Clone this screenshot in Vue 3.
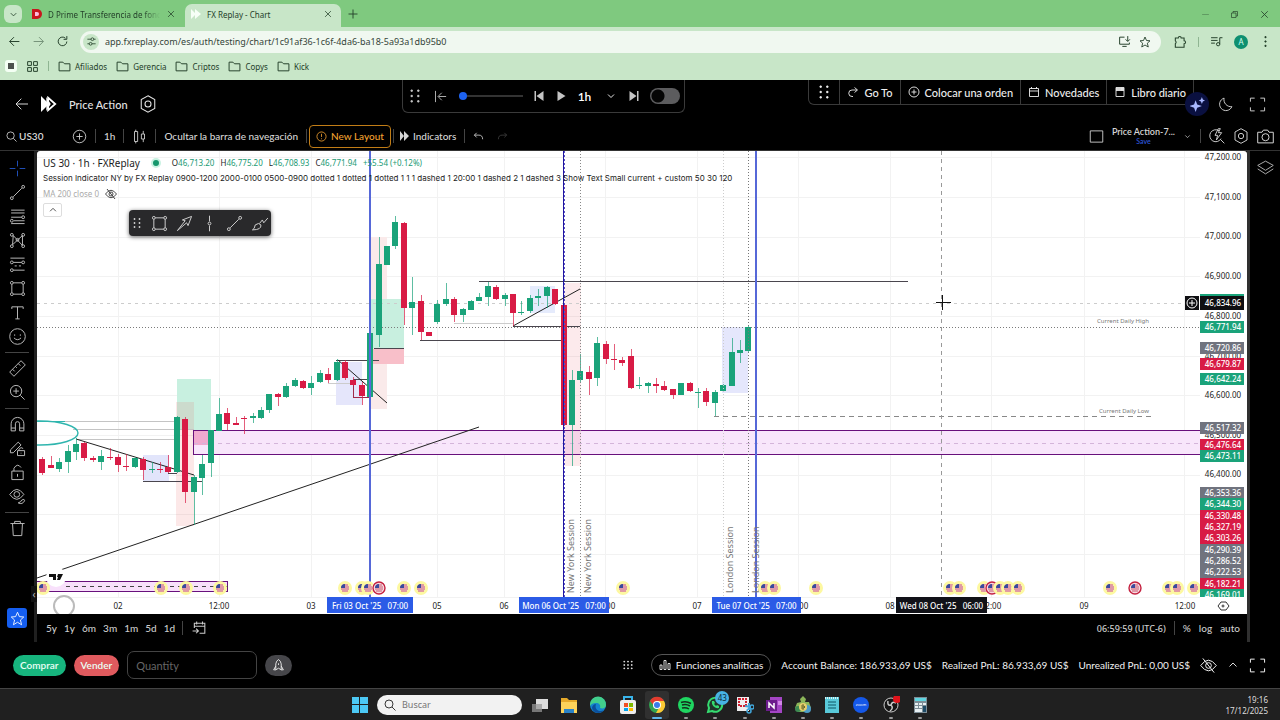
<template>
  <div class="screen">
    <header class="browser">
      <div class="tab-strip">
        <button class="tab-search" aria-label="Search tabs"><Icon name="chevronDown" :size="11" /></button>
        <div class="tab">
          <svg class="favicon" viewBox="0 0 10 10"><path d="M0 0h5a5 5 0 0 1 0 10H0z" fill="#c8161d" /><path d="M3 3h2a2 2 0 0 1 0 4H3z" fill="#fbd" /></svg>
          <span class="tab-title faded">D Prime Transferencia de fondos</span>
          <button aria-label="Close tab"><Icon name="close" :size="10" /></button>
        </div>
        <div class="tab active">
          <svg class="favicon" viewBox="0 0 10 10"><path d="M0 0l5 5-5 5zM4 0l6 5-6 5z" fill="#f7fff7" /></svg>
          <span class="tab-title">FX Replay - Chart</span>
          <button aria-label="Close tab"><Icon name="close" :size="10" /></button>
        </div>
        <button class="new-tab" aria-label="New tab"><Icon name="plus" :size="12" /></button>
        <div class="window-controls">
          <button class="dim" aria-label="Minimize"><Icon name="minimize" :size="9" /></button>
          <button aria-label="Restore"><Icon name="restore" :size="9" /></button>
          <button aria-label="Close"><Icon name="close" :size="11" /></button>
        </div>
      </div>
      <div class="address-row">
        <button aria-label="Back"><Icon name="back" :size="13" /></button>
        <button class="dim" aria-label="Forward"><Icon name="forward" :size="13" /></button>
        <button aria-label="Reload"><Icon name="reload" :size="13" /></button>
        <div class="address">
          <span class="tune"><Icon name="tune" :size="11" /></span>
          <input v-model="url" type="text" aria-label="Address" />
          <Icon name="install" :size="13" />
          <Icon name="star" :size="12" />
        </div>
        <button aria-label="Extensions"><Icon name="puzzle" :size="14" /></button>
        <i class="sep"></i>
        <button aria-label="Media"><Icon name="music" :size="13" /></button>
        <span class="avatar">A</span>
        <button aria-label="Menu"><Icon name="more" :size="13" /></button>
      </div>
      <nav class="bookmarks">
        <span class="stop"></span>
        <Icon name="apps" :size="13" />
        <i class="sep"></i>
        <a v-for="b in bookmarks" :key="b" href="#"><Icon name="folder" :size="13" />{{ b }}</a>
      </nav>
    </header>

    <section class="app-header">
      <div class="brand">
        <button aria-label="Back"><Icon name="back" :size="16" /></button>
        <svg class="logo" viewBox="0 0 18 18"><path d="M0 0l9 9-9 9z" fill="#fff" /><path d="M8 2l8 7-8 7z" fill="none" stroke="#fff" stroke-width="2" /><path d="M6 1l5 8-5 8z" fill="#fff" /></svg>
        <span class="session-name">Price Action</span>
        <button aria-label="Settings"><Icon name="hex" :size="18" /></button>
      </div>
      <div class="playback">
        <Icon name="grip" :size="16" />
        <button aria-label="Jump back"><Icon name="jumpStart" :size="15" /></button>
        <input v-model="speed" class="speed" type="range" min="0" max="100" aria-label="Speed" />
        <button aria-label="Previous"><Icon name="prev" :size="12" /></button>
        <button aria-label="Play"><Icon name="play" :size="12" /></button>
        <button class="interval">1h <Icon name="chevronDown" :size="12" /></button>
        <button aria-label="Next"><Icon name="next" :size="12" /></button>
        <input v-model="auto" class="switch" type="checkbox" aria-label="Auto play" />
      </div>
      <div class="actions">
        <span class="cell"><Icon name="grip" :size="16" /></span>
        <button v-for="a in actions" :key="a.label" class="cell"><Icon :name="a.icon" :size="12" />{{ a.label }}</button>
      </div>
      <div class="header-tools">
        <button class="ai" aria-label="Assistant"><Icon name="sparkle" :size="15" /></button>
        <button aria-label="Theme"><Icon name="moon" :size="17" /></button>
        <button class="expand" aria-label="Full screen"><Icon name="full" :size="17" /></button>
      </div>
    </section>

    <section class="chart-toolbar">
      <button class="symbol"><Icon name="search" :size="11" />US30</button>
      <button aria-label="Compare"><Icon name="circlePlus" :size="15" /></button>
      <i class="sep"></i>
      <button>1h</button>
      <i class="sep"></i>
      <button aria-label="Candles"><Icon name="candles" :size="15" /></button>
      <i class="sep"></i>
      <button class="hide-nav">Ocultar la barra de navegación</button>
      <i class="sep"></i>
      <button class="new-layout"><Icon name="info" :size="11" />New Layout</button>
      <i class="sep"></i>
      <button class="indicators"><svg viewBox="0 0 9 10"><path d="M0 0l4 5-4 5zM4 0l5 5-5 5z" fill="currentColor" /></svg>Indicators</button>
      <i class="sep"></i>
      <button class="undo" aria-label="Undo"><Icon name="undo" :size="11" /></button>
      <button class="redo" aria-label="Redo"><Icon name="redo" :size="11" /></button>
      <div class="layout-tools">
        <button aria-label="Layout"><Icon name="square" :size="15" /></button>
        <button class="layout-name">Price Action-7...<small>Save</small></button>
        <Icon name="chevronDown" :size="9" />
        <i class="sep"></i>
        <button aria-label="Quick search"><Icon name="quick" :size="16" /></button>
        <button aria-label="Chart settings"><Icon name="hex" :size="16" /></button>
        <button aria-label="Snapshot"><Icon name="camera" :size="17" /></button>
      </div>
    </section>

    <main class="workspace">
      <aside class="drawing-bar">
        <template v-for="(t, i) in drawingTools" :key="i">
          <hr v-if="t === '-'" />
          <button v-else :class="{ selected: t === 'cross' }" :aria-label="t"><Icon :name="t" :size="17" /></button>
        </template>
        <button class="favorites" aria-label="Favorites"><Icon name="star" :size="15" /></button>
      </aside>

      <div class="chart-column">
        <div class="chart">
          <svg class="plot" viewBox="37 151 1210 463">
            <g class="crisp">
              <path v-for="y in gridRows" :key="'r' + y" :d="`M37 ${y}H1200`" class="grid" />
              <path v-for="x in gridCols" :key="'c' + x" :d="`M${x} 151V597`" class="grid" />
              <path d="M37 597H1200" class="grid" />
              <rect v-for="(z, i) in zones" :key="'z' + i" :x="z[0]" :y="z[1]" :width="z[2] - z[0]" :height="z[3] - z[1]" :fill="z[4]" />
              <path v-for="(l, i) in lines" :key="'l' + i" :d="l[0]" :stroke="l[1]" :stroke-width="l[2] || 1" :stroke-dasharray="l[3]" fill="none" />
            </g>
            <path d="M37 578L479 427M76 439L194 475M338 360L387 403M513 326L580 289" class="trend" />
            <ellipse cx="40" cy="433" rx="38" ry="12" class="oval" />
            <g class="crisp">
              <g v-for="(c, i) in bars" :key="'b' + i" :fill="c.color">
                <rect :x="c.x" :y="c.high" width="1" :height="c.low - c.high" opacity="0.7" />
                <rect :x="c.x - 3" :y="c.top" width="6" :height="c.height" />
              </g>
              <path v-for="s in sessionLines" :key="s[0]" :d="`M${s[0]} 151V597`" :stroke="s[1]" :stroke-width="s[2]" :stroke-dasharray="s[3]" />
            </g>
            <text v-for="s in sessionNames" :key="s[0]" class="session" :transform="`translate(${s[0]} 593) rotate(-90)`">{{ s[1] }}</text>
            <text x="1149" y="323" class="note">Current Daily High</text>
            <text x="1149" y="413" class="note">Current Daily Low</text>

            <circle cx="56" cy="577" r="10" fill="#fff" />
            <path d="M49 574h7v6h-3v-3h-4zM58 574h5l-3 6h-3l1-3h-1z" fill="#111" />
            <g v-for="(e, i) in events" :key="'e' + i" :transform="`translate(${e.x} 588)`">
              <circle r="7" :fill="e.hot ? '#fff' : '#fdf8a0'" />
              <circle v-if="e.hot" r="6" fill="#f7d9e0" stroke="#c4203f" stroke-width="1.4" />
              <circle r="4" fill="#e9dce6" />
              <path d="M-4 -1H4M-4 1H4M-3 3H3M-2 -3H3" stroke="#d4566a" />
              <path d="M0 0H-4A4 4 0 0 1 0 -4z" fill="#3a4a9c" />
            </g>

            <g class="axis">
              <text v-for="t in times" :key="t[0]" :x="t[0]" y="609">{{ t[1] }}</text>
              <g v-for="t in dateTags" :key="t.x">
                <rect :x="t.x" y="597" :width="t.w" height="16" :fill="t.color" />
                <text :x="t.x + t.w / 2" y="609" class="tag">{{ t.text }}</text>
              </g>
              <text v-for="p in prices" :key="p[0]" x="1223" :y="p[0] + 3">{{ p[1] }}</text>
              <g v-for="p in priceTags" :key="p[1]">
                <rect x="1200" :y="p[0] - 6" width="44" height="12" :fill="p[2]" />
                <text x="1223" :y="p[0] + 3" class="tag">{{ p[1] }}</text>
              </g>
              <rect x="1200" y="294" width="44" height="3" fill="#1aa37a" />
              <rect x="1200" y="296" width="44" height="14" fill="#0f0f12" />
              <text x="1223" y="306" class="tag">46,834.96</text>
              <rect x="1200" y="597" width="47" height="17" fill="#fff" />
            </g>
            <rect x="1185" y="296" width="14" height="14" fill="#0f0f12" />
            <circle cx="1192" cy="303" r="5" class="ring" />
            <path d="M1192 300v6M1189 303h6" stroke="#fff" />
            <path d="M936 302.5h15M942.5 295v15" stroke="#111" />
            <circle cx="64" cy="606" r="10" fill="#fff" fill-opacity="0.6" stroke="#bbb" stroke-width="2" />
            <path d="M1221 602h5l3 4-3 4h-5l-3-4z" fill="none" stroke="#333" />
            <circle cx="1223" cy="606" r="1" fill="none" stroke="#333" />
          </svg>

          <div class="legend">
            <p class="legend-title">US 30 · 1h · FXReplay <i class="live"></i>
              <span class="ohlc">O<b>46,713.20</b> H<b>46,775.20</b> L<b>46,708.93</b> C<b>46,771.94</b> <b>+55.54 (+0.12%)</b></span>
            </p>
            <p class="legend-study">Session Indicator NY by FX Replay 0900-1200 2000-0100 0500-0900 dotted 1 dotted 1 dotted 1 1 1 dashed 1 20:00 1 dashed 2 1 dashed 3 Show Text Small current + custom 50 30 120</p>
            <p class="legend-ma">MA 200 close 0 <Icon name="eyeOff" :size="12" /></p>
            <button class="collapse" aria-label="Collapse"><Icon name="chevronUp" :size="10" /></button>
          </div>

          <div class="floating-tools">
            <Icon name="grip" :size="12" />
            <button v-for="t in favoriteTools" :key="t" :aria-label="t"><Icon :name="t" :size="17" /></button>
          </div>
          <button class="drawer" aria-label="Hide tools">‹</button>
        </div>

        <footer class="range-bar">
          <button v-for="r in ranges" :key="r">{{ r }}</button>
          <i class="sep"></i>
          <button class="go-date" aria-label="Go to date"><Icon name="calendar" :size="14" /></button>
          <div class="scale-tools">
            <span class="utc">06:59:59 (UTC-6)</span>
            <i class="sep"></i>
            <button>%</button>
            <button>log</button>
            <button>auto</button>
          </div>
        </footer>
      </div>

      <aside class="right-rail">
        <button aria-label="Object tree"><Icon name="layers" :size="17" /></button>
      </aside>
    </main>

    <section class="account">
      <button class="buy">Comprar</button>
      <button class="sell">Vender</button>
      <input v-model="quantity" class="quantity" type="text" placeholder="Quantity" aria-label="Quantity" />
      <button class="rocket" aria-label="Quick order"><Icon name="rocket" :size="13" /></button>
      <div class="stats">
        <Icon class="dots" name="dots" :size="10" />
        <button class="analytics"><Icon name="chart" :size="12" />Funciones analíticas</button>
        <span>Account Balance: 186.933,69 US$</span>
        <span>Realized PnL: 86.933,69 US$</span>
        <span>Unrealized PnL: 0,00 US$</span>
        <button aria-label="Hide balance"><Icon name="eyeOff" :size="17" /></button>
        <button aria-label="Expand"><Icon name="chevronUp" :size="12" /></button>
        <button aria-label="Full screen"><Icon name="full" :size="17" /></button>
      </div>
    </section>

    <footer class="taskbar">
      <div></div>
      <div class="pinned">
        <button aria-label="Start">
          <svg viewBox="0 0 16 16" width="16" height="16"><path d="M0 0h7v7H0zM8 0h8v7H8zM0 8h7v8H0zM8 8h8v8H8z" fill="#4cc8f4" /></svg>
        </button>
        <label class="search"><Icon name="search" :size="12" /><input v-model="query" type="text" placeholder="Buscar" aria-label="Buscar" /></label>
        <div class="apps">
          <button aria-label="Task view"><svg viewBox="0 0 18 18"><path d="M1 8h10v8H1z" fill="#777" /><path d="M5 3h12v10H5z" fill="#ddd" /><path d="M5 8h6v5H5z" fill="#aaa" /></svg></button>
          <button aria-label="Files"><svg viewBox="0 0 18 18"><path d="M1 2h6l2 2h8v13H1z" fill="#e5a92a" /><path d="M1 6h16v11H1z" fill="#fbd25a" /><path d="M4 13h10v4H4z" fill="#2a83c8" /></svg></button>
          <button aria-label="Edge"><svg viewBox="0 0 18 18"><circle cx="9" cy="9" r="8" fill="#1484cf" /><path d="M1 8a8 8 0 0 1 16 1c0 3-3 4-6 3 1-3-1-5-4-5-3 0-5 1-6 3z" fill="#42cf8c" /><path d="M7 8c-2 5 3 9 8 6-4 5-11 3-12-2 0-2 2-4 4-4z" fill="#0c4f9c" /></svg></button>
          <button aria-label="Store"><svg viewBox="0 0 18 18"><path d="M5 5V1h8v4" fill="none" stroke="#39b4ea" stroke-width="2" /><rect x="1" y="4" width="16" height="14" rx="2" fill="#eee" /><path d="M5 7h4v4H5z" fill="#f25022" /><path d="M10 7h4v4h-4z" fill="#7fba00" /><path d="M5 12h4v3H5z" fill="#00a4ef" /><path d="M10 12h4v3h-4z" fill="#ffb900" /></svg></button>
          <button class="current" aria-label="Chrome"><svg viewBox="0 0 18 18"><circle cx="9" cy="9" r="8" fill="#31a350" /><path d="M2 5a8 8 0 0 1 14 0z" fill="#e33b2e" /><path d="M2 5l5 6 2-6z" fill="#e33b2e" /><path d="M9 5h7a8 8 0 0 1-8 12l4-7z" fill="#fcc934" /><circle cx="9" cy="9" r="4" fill="#fff" /><circle cx="9" cy="9" r="3" fill="#3a7ce8" /></svg></button>
          <button class="open" aria-label="Spotify"><svg viewBox="0 0 18 18"><circle cx="9" cy="9" r="8" fill="#1fd661" /><path d="M4 6.500q5-2 10 1M5 9q4-1.500 8 1M5 12q4-1 7 1" fill="none" stroke="#14301d" stroke-width="1.500" /></svg></button>
          <button class="open" aria-label="WhatsApp"><svg viewBox="0 0 18 18"><path d="M2 16l1-4a7 7 0 1 1 3 3z" fill="#20352a" stroke="#35dc70" stroke-width="2" /><path d="M6 5c-1 4 3 8 7 7l0-2-2-1-1 1-2-2 1-1-1-2z" fill="#35dc70" /></svg><em>43</em></button>
          <button class="open" aria-label="Snipping"><svg viewBox="0 0 18 18"><rect x="1" y="1" width="12" height="14" fill="#eee" /><path d="M3 3h7v7H3z" fill="none" stroke="#cf2030" stroke-width="2" stroke-dasharray="2 1" /><path d="M9 10l6 1M13 7l0 7" stroke="#41a5d8" stroke-width="2" /><circle cx="13" cy="15" r="2" fill="none" stroke="#41a5d8" stroke-width="1.500" /><circle cx="16" cy="11" r="2" fill="none" stroke="#41a5d8" stroke-width="1.500" /></svg></button>
          <button class="open" aria-label="OneNote"><svg viewBox="0 0 18 18"><path d="M5 1h12v16H5z" fill="#a445c5" /><path d="M13 5h4v4h-4z" fill="#d085e6" /><path d="M1 4h11v11H1z" fill="#6b1c8b" /><path d="M4 12V7l5 5V7" fill="none" stroke="#fff" stroke-width="1.500" /></svg></button>
          <button class="open" aria-label="Money"><svg viewBox="0 0 18 18"><path d="M9 0l3 3-1 3h4l2 6-3 4H4l-3-4 2-5 4-1-1-3z" fill="#8cb65a" /><circle cx="13" cy="13" r="4" fill="#4d9dc7" /><circle cx="4" cy="13" r="3" fill="#3d8a52" /><circle cx="9" cy="11" r="4" fill="#e6cf6c" /><path d="M9 8v6M7 10h3l1 1-1 1H7" fill="none" stroke="#6b6a2c" /></svg></button>
          <button class="open" aria-label="Notepad"><svg viewBox="0 0 18 18"><rect x="2" y="1" width="14" height="16" fill="#59c9d9" /><path d="M2 2h14" stroke="#d9f5f8" stroke-width="2" stroke-dasharray="1 1" /><path d="M5 6h8M5 9h8M5 12h8" stroke="#0e5766" /></svg></button>
          <button class="open" aria-label="Zoom"><svg viewBox="0 0 18 18"><circle cx="9" cy="9" r="8" fill="#1558e8" /><text x="9" y="10" class="zoom-mark">zoom</text></svg></button>
          <button class="open" aria-label="OBS"><svg viewBox="0 0 18 18"><circle cx="9" cy="9" r="7" fill="#161616" stroke="#ccc" /><path d="M9 9q-4 1-3-4M9 9q1-4 5-2M9 9q3 3-1 6" fill="none" stroke="#ccc" stroke-width="1.500" /><circle cx="15" cy="3" r="4" fill="#e0131b" /></svg></button>
          <button class="open" aria-label="Calculator"><svg viewBox="0 0 18 18"><rect x="3" y="1" width="13" height="16" fill="#7d8d96" /><path d="M4 2h11v3H4z" fill="#5fd4e0" /><path d="M4 7h3v2H4zM8 7h3v2H8zM12 7h3v2h-3zM4 10h3v2H4zM8 10h3v2H8zM4 13h7v3H4z" fill="#e6eef1" /><path d="M12 10h3v6h-3z" fill="#1f4b66" /></svg></button>
        </div>
      </div>
      <div class="clock">19:16<br />17/12/2025</div>
    </footer>
  </div>
</template>

<script setup>
import { h, ref } from "vue";

const DOT = (x, y) => `M${x - 1} ${y - 1}h2v2h-2z`;

const paths = {
  chevronDown: "M6 9l6 6 6-6",
  chevronUp: "M5 15l7-7 7 7",
  close: "M5 5l14 14M19 5L5 19",
  plus: "M12 3v18M3 12h18",
  minimize: "M3 12h18",
  restore: "M4 8h12v12H4zM8 8V4h12v12h-4",
  back: "M21 12H3M11 4l-8 8 8 8",
  forward: "M3 12h18M13 4l8 8-8 8",
  reload: "M20 12a8 8 0 1 1-2.500-6M20 2v6h-6",
  tune: "M3 7h8M17 7h4M3 17h4M13 17h8M14 4a3 3 0 1 0 0 6 3 3 0 0 0 0-6zM10 14a3 3 0 1 0 0 6 3 3 0 0 0 0-6z",
  install: "M12 4H3v13h18v-3M8 21h8M18 2v9M14 8l4 4 4-4",
  star: "M12 2l3 7 7 .6-5.300 4.800L18.500 22 12 18l-6.500 4 1.800-7.600L2 9.600 9 9z",
  puzzle: "M4 5h5a2.500 2.500 0 0 1 5 0h5v5a2.500 2.500 0 0 1 0 5v6H4v-6a3 3 0 0 0 0-5z",
  music: "M2 5h12M2 10h12M2 15h7M18 17V5h5M18 17a3 3 0 1 1-3-3 3 3 0 0 1 3 3z",
  more: DOT(12, 4) + DOT(12, 12) + DOT(12, 20),
  apps: "M3 3h7v7H3zM14 3h7v7h-7zM3 14h7v7H3zM14 14h7v7h-7z",
  folder: "M2 4h7l3 3h10v13H2z",
  hex: "M12 1l9 5v12l-9 5-9-5V6zM12 8a4 4 0 1 0 0 8 4 4 0 0 0 0-8z",
  grip: [4, 12, 20].map((y) => DOT(7, y) + DOT(17, y)).join(""),
  dots: [4, 12, 20].map((y) => DOT(3, y) + DOT(12, y) + DOT(21, y)).join(""),
  jumpStart: "M4 3v18M21 12H9M14 6l-6 6 6 6",
  prev: "M3 2h3v20H3zM21 2v20L7 12z",
  play: "M5 2l16 10L5 22z",
  next: "M18 2h3v20h-3zM3 2v20l14-10z",
  goTo: "M20 8H10a6.500 6.500 0 0 0 0 13h2M15 3l6 5-6 5",
  circlePlus: "M12 2a10 10 0 1 0 0 20 10 10 0 0 0 0-20zM12 7v10M7 12h10",
  calendarDay: "M3 5h18v16H3zM3 10h18M7 2v4M17 2v4",
  book: "M4 3h16v18H4zM4 5h16M4 7h16M4 9h16M16 3v7",
  sparkle: "M9 5l2.500 7L19 14.500 11.500 17 9 24 6.500 17-1 14.500 6.500 12zM19 0l1.500 4L24 5.500 20.500 7 19 11l-1.500-4L14 5.500 17.500 4z",
  moon: "M10 3a9 9 0 1 0 11 12A10 10 0 0 1 10 3z",
  full: "M2 8V3h6M16 3h6v5M22 16v5h-6M8 21H2v-5",
  search: "M10 2a8 8 0 1 0 0 16 8 8 0 0 0 0-16zM16 16l7 7",
  candles: "M4 4h5v16H4zM6 1v3M6 20v3M15 8h5v8h-5zM18 3v5M18 16v5",
  info: "M12 2a10 10 0 1 0 0 20 10 10 0 0 0 0-20zM12 6v7M12 16v2",
  undo: "M8 4L3 9l5 5M3 9h10q8 0 8 9",
  redo: "M16 4l5 5-5 5M21 9H11q-8 0-8 9",
  square: "M2 3h20v18H2z",
  quick: "M15 4a9 9 0 1 0 3 12M17 17l6 6M14 1l-5 10h4l-2 7 8-11h-5l3-6z",
  camera: "M1 6h6l2-3h6l2 3h6v15H1zM12 8a5 5 0 1 0 0 10 5 5 0 0 0 0-10z",
  cross: "M12 1v8M12 15v8M1 12h8M15 12h8",
  trendLine: "M6 18L18 6M4 18a2 2 0 1 0 0 4 2 2 0 0 0 0-4zM20 2a2 2 0 1 0 0 4 2 2 0 0 0 0-4z",
  fib: "M3 3h19M3 7h19M3 13h15M7 18h15M3 22h19M20 11a2 2 0 1 0 0 4 2 2 0 0 0 0-4zM4 16a2 2 0 1 0 0 4 2 2 0 0 0 0-4z",
  pattern: "M5 18L6 5l13 14 0-14L5 18M4 2a2 2 0 1 0 0 4 2 2 0 0 0 0-4zM20 2a2 2 0 1 0 0 4 2 2 0 0 0 0-4zM4 18a2 2 0 1 0 0 4 2 2 0 0 0 0-4zM20 18a2 2 0 1 0 0 4 2 2 0 0 0 0-4zM12 9a2 2 0 1 0 0 4 2 2 0 0 0 0-4z",
  forecast: "M2 3h20M6 9h12M8 14h3M14 14h3M6 20h16M4 7a2 2 0 1 0 0 4 2 2 0 0 0 0-4zM20 7a2 2 0 1 0 0 4 2 2 0 0 0 0-4zM4 18a2 2 0 1 0 0 4 2 2 0 0 0 0-4z",
  rect: "M6 4h12M6 20h12M4 6v12M20 6v12M4 2a2 2 0 1 0 0 4 2 2 0 0 0 0-4zM20 2a2 2 0 1 0 0 4 2 2 0 0 0 0-4zM4 18a2 2 0 1 0 0 4 2 2 0 0 0 0-4zM20 18a2 2 0 1 0 0 4 2 2 0 0 0 0-4z",
  text: "M4 7V4h16v3M12 4v17M9 21h6",
  smile: "M12 1a11 11 0 1 0 0 22 11 11 0 0 0 0-22zM8 9v2M16 9v2M7 14q5 5 10 0",
  ruler: "M1 17L17 1l6 6L7 23zM5 13l3 3M9 9l2 2M13 5l3 3",
  zoomIn: "M10 2a8 8 0 1 0 0 16 8 8 0 0 0 0-16zM16 16l6 6M10 6v8M6 10h8",
  magnet: "M3 21V11a9 9 0 0 1 18 0v10h-6V11a3 3 0 0 0-6 0v10zM3 17h6M15 17h6",
  lockDraw: "M2 14L13 3l4 4L6 18H2zM12 15h10v7H12zM14 15v-2q3-4 6-1M17 18v1",
  lock: "M4 10h16v12H4zM7 10V6q5-8 10-1M12 14v4",
  eyeDraw: "M1 9q10-14 20 0-10 14-20 0zM11 5a4 4 0 1 0 0 8 4 4 0 0 0 0-8zM13 21q4-1 5-4l3-1 1 2q-3 6-9 3z",
  trash: "M2 5h20M8 5V2h8v3M5 5l1 17h12l1-17",
  arrow: "M2 22L13 8l-4-1L22 2l-5 13-2-4z",
  vline: "M12 1v8M12 15v8M12 10a2 2 0 1 0 0 4 2 2 0 0 0 0-4z",
  brush: "M2 21q3-1 4-7 5-4 8 0 1 7-12 7zM12 12l4-5 2 4 6-7",
  eyeOff: "M1 12q11-15 22 0-11 15-22 0zM12 8a4 4 0 1 0 0 8 4 4 0 0 0 0-8zM4 2l16 20",
  layers: "M1 9l11-6 11 6-11 7zM1 14l11 7 11-7",
  calendar: "M4 12V4h18v17h-9M4 9h18M8 1v5M18 1v5M1 17h9M7 13l4 4-4 4",
  chart: "M2 12h4v9H2zM10 3h4v18h-4zM18 9h4v12h-4z",
  rocket: "M7 20V9q1-6 5-8 4 2 5 8v11l-5-3zM7 13l-4 7h4M17 13l4 7h-4M12 8v3",
};
const solid = ["more", "grip", "dots", "prev", "play", "next", "sparkle"];
const plain = ["prev", "play", "next", "sparkle"];

const Icon = ({ name, size }) =>
  h("svg", { viewBox: "0 0 24 24", width: size, height: size, "aria-hidden": "true" }, [
    h("path", {
      d: paths[name],
      fill: solid.includes(name) ? "currentColor" : "none",
      stroke: plain.includes(name) ? "none" : "currentColor",
      "stroke-width": size < 15 ? 1.8 : 1.4,
    }),
  ]);
Icon.props = ["name", "size"];

const url = ref("app.fxreplay.com/es/auth/testing/chart/1c91af36-1c6f-4da6-ba18-5a93a1db95b0");
const speed = ref(0);
const auto = ref(false);
const quantity = ref("");
const query = ref("");

const bookmarks = ["Afiliados", "Gerencia", "Criptos", "Copys", "Kick"];
const actions = [
  { label: "Go To", icon: "goTo" },
  { label: "Colocar una orden", icon: "circlePlus" },
  { label: "Novedades", icon: "calendarDay" },
  { label: "Libro diario", icon: "book" },
];
const drawingTools = [
  "cross", "trendLine", "fib", "pattern", "forecast", "rect", "text", "smile", "-",
  "ruler", "zoomIn", "-", "magnet", "lockDraw", "lock", "eyeDraw", "-", "trash",
];
const favoriteTools = ["rect", "arrow", "vline", "trendLine", "brush"];
const ranges = ["5y", "1y", "6m", "3m", "1m", "5d", "1d"];

const GREEN = "#1aa37a";
const RED = "#d81b45";
const GRAY = "#70737e";

// direction, high, low, body top, body bottom
const candles = [
  [0, 457, 475, 459, 473], [0, 456, 468, 465, 468], [1, 458, 472, 462, 469], [1, 445, 473, 451, 462],
  [1, 438, 460, 444, 452], [0, 442, 461, 443, 458], [0, 456, 462, 458, 460], [1, 450, 470, 456, 462],
  [0, 448, 460, 457, 458], [0, 454, 472, 457, 465], [0, 454, 471, 466, 467], [1, 457, 468, 458, 467],
  [0, 457, 480, 459, 470], [1, 462, 473, 469, 470], [0, 462, 473, 469, 470], [0, 455, 473, 467, 472],
  [1, 416, 473, 417, 472], [0, 417, 503, 419, 492], [1, 475, 525, 477, 492], [1, 455, 495, 464, 478],
  [1, 430, 477, 430, 463], [1, 398, 431, 414, 431], [0, 408, 430, 413, 424], [0, 417, 425, 423, 425],
  [0, 416, 434, 418, 419], [1, 413, 423, 416, 418], [1, 407, 419, 410, 418], [1, 394, 413, 394, 410],
  [0, 393, 406, 394, 397], [1, 383, 398, 386, 397], [1, 378, 387, 380, 386], [0, 380, 389, 381, 388],
  [1, 376, 395, 383, 388], [1, 370, 383, 373, 382], [0, 368, 383, 374, 380], [1, 359, 381, 362, 380],
  [0, 360, 380, 362, 378], [0, 377, 386, 380, 385], [0, 382, 405, 385, 396], [1, 333, 397, 333, 397],
  [1, 237, 347, 264, 335], [1, 246, 265, 246, 265], [1, 216, 249, 222, 246], [0, 222, 325, 223, 308],
  [1, 277, 335, 302, 308], [0, 295, 340, 301, 332], [0, 332, 336, 332, 336], [1, 300, 324, 304, 322],
  [1, 283, 306, 299, 304], [0, 297, 322, 299, 315], [1, 308, 322, 309, 315], [1, 300, 310, 301, 310],
  [1, 293, 301, 297, 301], [1, 282, 306, 286, 297], [0, 285, 300, 287, 299], [1, 293, 306, 295, 299],
  [0, 294, 326, 294, 313], [1, 301, 315, 312, 313], [1, 295, 313, 298, 311], [1, 289, 306, 296, 298],
  [1, 286, 308, 287, 296], [0, 289, 305, 289, 304], [0, 304, 426, 305, 425], [1, 370, 466, 380, 425],
  [1, 354, 382, 371, 380], [0, 366, 395, 372, 379], [1, 337, 386, 343, 378], [0, 341, 364, 344, 359],
  [0, 344, 370, 359, 360], [0, 357, 366, 360, 363], [0, 349, 389, 356, 388], [1, 377, 389, 385, 386],
  [1, 382, 393, 383, 386], [0, 378, 393, 384, 386], [0, 381, 391, 386, 390], [0, 389, 399, 389, 395],
  [1, 383, 395, 383, 395], [0, 382, 392, 383, 391], [1, 388, 408, 392, 393], [0, 388, 406, 391, 402],
  [1, 390, 416, 392, 403], [1, 384, 392, 385, 391], [1, 338, 386, 352, 386], [1, 340, 363, 350, 353],
  [1, 326, 352, 327, 351],
];
const bars = candles.map(([up, high, low, top, bottom], i) => ({
  x: Math.round(42.4 + i * 8.405),
  color: up ? GREEN : RED,
  high,
  low,
  top,
  height: bottom - top,
}));

const gridRows = [157, 197, 237, 276, 316, 356, 395, 435, 475, 514, 554];
const gridCols = [118, 219, 311, 437, 504, 605, 697, 798, 890, 991, 1084, 1184];

const zones = [
  [177, 379, 211, 430, "#c8f0e0"],
  [176, 402, 194, 526, "rgba(230,80,80,0.13)"],
  [194, 431, 1200, 455, "#f8e6fb"],
  [194, 431, 211, 445, "#f0a9cf"],
  [143, 455, 169, 481, "#e2e5fb"],
  [37, 581, 228, 592, "#f8e0fb"],
  [336, 362, 362, 405, "#e5e6fb"],
  [371, 237, 387, 409, "#faeaea"],
  [371, 299, 404, 348, "#c8efdf"],
  [371, 349, 404, 364, "#f8bfc9"],
  [530, 286, 555, 313, "#e5ebfc"],
  [563, 283, 581, 466, "rgba(225,60,80,0.11)"],
  [722, 327, 748, 393, "#e5e7fc"],
];
const lines = [
  ["M65 421H177M73 429H194M78 439H177", "#c4c4c4"],
  ["M37 421H65", "#2fb5ae"],
  ["M1200 430H193V454H1200", "#68107c"],
  ["M194 443H1200", "#d4b5da", 1, "4 4"],
  ["M37 581H227V591H37", "#68107c"],
  ["M66 586H228", "#444", 1, "4 4"],
  ["M143 481H202M336 360H379M353 379H371M374 348H404M479 281H908M513 326H580M420 340H563M168 473H177", "#4a464e"],
  ["M353 385V397H370", "#a02a4a"],
  ["M328 383H353M454 323H513", "#ccc"],
  ["M37 303H1185", "#ccc", 1, "3 4"],
  ["M37 327H1200", "#7b7b7b", 1, "1 2"],
  ["M714 416H1151", "#888", 1, "5 4"],
];
const sessionLines = [
  [370, "#5668d8", 2],
  [563, "#2016a0", 1],
  [564, "#5a52c4", 1, "2 2"],
  [580, "#888", 1, "1 2"],
  [723, "#ccc", 1, "1 2"],
  [748, "#777", 1, "1 2"],
  [756, "#5668d8", 2],
  [941, "#999", 1, "4 4"],
];
const sessionNames = [
  [574, "New York Session"],
  [591, "New York Session"],
  [733, "London Session"],
  [759, "London Session"],
];

const hotEvents = [379, 992, 1135];
const events = [
  43, 161, 186, 220, 345, 362, 368, 379, 404, 421, 623, 765, 774, 816, 950, 959, 984, 992, 1000, 1008,
  1018, 1110, 1135, 1169, 1177, 1194,
].map((x) => ({ x, hot: hotEvents.includes(x) }));

const times = [
  [118, "02"], [219, "12:00"], [311, "03"], [437, "05"], [504, "06"], [605, "12:00"],
  [697, "07"], [798, "12:00"], [890, "08"], [991, "12:00"], [1084, "09"], [1185, "12:00"],
];
const dateTags = [
  { x: 327, w: 86, color: "#2b5be6", text: "Fri 03 Oct '25   07:00" },
  { x: 519, w: 90, color: "#2b5be6", text: "Mon 06 Oct '25   07:00" },
  { x: 712, w: 89, color: "#2b5be6", text: "Tue 07 Oct '25   07:00" },
  { x: 896, w: 91, color: "#111218", text: "Wed 08 Oct '25   06:00" },
];
const prices = [
  [157, "47,200.00"], [197, "47,100.00"], [236, "47,000.00"], [276, "46,900.00"], [316, "46,800.00"],
  [356, "46,700.00"], [395, "46,600.00"], [435, "46,500.00"], [474, "46,400.00"],
];
const priceTags = [
  [327, "46,771.94", GREEN], [348, "46,720.86", GRAY], [364, "46,679.87", RED], [379, "46,642.24", GREEN],
  [428, "46,517.32", GRAY], [445, "46,476.64", RED], [456, "46,473.11", GREEN], [493, "46,353.36", GRAY],
  [504, "46,344.30", GREEN], [516, "46,330.48", RED], [527, "46,327.19", RED], [538, "46,303.26", RED],
  [550, "46,290.39", GRAY], [561, "46,286.52", GRAY], [572, "46,222.53", GRAY], [584, "46,182.21", RED],
  [595, "46,169.01", GREEN],
];
</script>

<style>
body {
  margin: 0;
  background: #000;
}
</style>

<style scoped>
.screen {
  min-height: 100vh;
  display: flex;
  flex-direction: column;
  background: #000;
  color: #e4e4e4;
  font-family: "Noto Sans", "Open Sans", sans-serif;
  font-size: 10px;
  overflow: hidden;
}

button {
  display: flex;
  align-items: center;
  justify-content: center;
  padding: 0;
  border: none;
  background: transparent;
  color: inherit;
  font: inherit;
  white-space: nowrap;
  cursor: pointer;
}

input {
  min-width: 0;
  font: inherit;
}

svg {
  display: block;
  flex: none;
}

.sep {
  flex: none;
  width: 1px;
  height: 14px;
  background: #444;
}

/* browser */
.browser {
  background: #c8e6c8;
  color: #24402a;
  font-size: 9px;
}

.tab-strip {
  box-sizing: border-box;
  display: flex;
  align-items: flex-end;
  height: 27px;
  padding-left: 4px;
  background: #7fc97f;
}

.tab-strip > button,
.window-controls {
  margin-bottom: 4px;
  height: 18px;
}

.tab-search {
  width: 18px;
  border-radius: 6px;
  background: #c8e6c8;
}

.tab {
  box-sizing: border-box;
  display: flex;
  align-items: center;
  gap: 6px;
  width: 144px;
  height: 23px;
  margin-left: 10px;
  padding-bottom: 3px;
  font-size: 8px;
}

.tab.active {
  width: 156px;
  margin-left: 9px;
  padding: 0 8px 3px 6px;
  border-radius: 7px 7px 0 0;
  background: #c8e6c8;
}

.tab-title {
  flex: 1;
  overflow: hidden;
  white-space: nowrap;
}

.faded {
  mask-image: linear-gradient(90deg, #000 85%, transparent);
}

.favicon {
  width: 10px;
  height: 10px;
}

.tab-strip .new-tab {
  margin-left: 6px;
}

.window-controls {
  display: flex;
  gap: 20px;
  margin-left: auto;
  padding-right: 10px;
}

.address-row {
  display: flex;
  align-items: center;
  gap: 11px;
  height: 29px;
  padding: 0 8px;
}

.dim {
  opacity: 0.5;
}

.address {
  flex: 1;
  display: flex;
  align-items: center;
  gap: 8px;
  height: 22px;
  margin-right: 1px;
  padding: 0 10px 0 3px;
  border-radius: 11px;
  background: #f0f8f0;
}

.address input {
  flex: 1;
  margin-left: -2px;
  padding: 0;
  border: none;
  background: transparent;
  color: #35453a;
}

.tune {
  display: flex;
  align-items: center;
  justify-content: center;
  width: 16px;
  height: 16px;
  border-radius: 50%;
  background: #c8e6c8;
}

.address-row .sep,
.bookmarks .sep {
  height: 10px;
  background: #8fb592;
}

.avatar {
  width: 14px;
  height: 14px;
  border-radius: 50%;
  background: #0e9070;
  color: #d8fff0;
  font-size: 8px;
  line-height: 14px;
  text-align: center;
}

.bookmarks {
  box-sizing: border-box;
  display: flex;
  align-items: center;
  gap: 9px;
  height: 24px;
  padding: 0 0 4px 5px;
}

.bookmarks a {
  display: flex;
  align-items: center;
  gap: 4px;
  color: inherit;
  font-size: 8px;
  text-decoration: none;
}

.stop {
  width: 6px;
  height: 6px;
  border: 3px solid #f4fff4;
  border-radius: 3px;
  background: #4d524e;
}

/* app header */
.app-header,
.chart-toolbar,
.range-bar,
.account {
  font-family: Lato, "Noto Sans", sans-serif;
}

.app-header {
  display: flex;
  align-items: flex-start;
  height: 42px;
}

.brand {
  flex: 0 0 388px;
  display: flex;
  align-items: center;
  gap: 10px;
  height: 48px;
  padding-left: 14px;
}

.logo {
  width: 18px;
  height: 16px;
}

.session-name {
  margin: 0 1px;
  font-size: 11px;
  font-weight: 500;
}

.playback {
  display: flex;
  align-items: center;
  justify-content: space-between;
  width: 273px;
  height: 32px;
  padding: 0 4px;
  border: 1px solid #3a3a3a;
  border-top: none;
  border-radius: 0 0 6px 6px;
  color: #c4c4c4;
}

.speed {
  width: 64px;
  height: 8px;
  margin: 0;
  appearance: none;
  background: linear-gradient(#333, #333) center / 100% 2px no-repeat;
}

.speed::-webkit-slider-thumb {
  appearance: none;
  width: 8px;
  height: 8px;
  border-radius: 50%;
  background: #1d62f0;
}

.interval {
  gap: 14px;
  color: #fff;
  font-size: 12px;
  font-weight: 600;
}

.switch {
  width: 30px;
  height: 16px;
  margin: 0;
  appearance: none;
  border-radius: 8px;
  background: radial-gradient(circle at 8px 8px, #050505 6px, transparent 7px) #5c5c5e;
}

.actions {
  display: flex;
  height: 24px;
  margin-left: auto;
  border: 1px solid #3a3a3a;
  border-top: none;
  border-radius: 0 0 6px 6px;
}

.cell {
  display: flex;
  align-items: center;
  gap: 5px;
  padding: 0 7px;
  color: #eee;
  font-size: 11px;
  font-weight: 500;
}

.cell + .cell {
  border-left: 1px solid #3a3a3a;
}

.header-tools {
  display: flex;
  align-items: center;
  gap: 8px;
  height: 48px;
  padding: 0 14px 0 0;
  margin-left: -9px;
  color: #c8c8c8;
}

.expand {
  margin-left: 7px;
}

.ai {
  width: 24px;
  height: 24px;
  border-radius: 50%;
  background: #0a1040;
  color: #a8b8ff;
}

/* chart toolbar */
.chart-toolbar {
  display: flex;
  align-items: center;
  gap: 8px;
  height: 28px;
  padding-left: 6px;
  border-bottom: 1px solid #333;
  color: #d6d6d6;
  font-size: 10px;
  font-weight: 500;
}

.symbol {
  gap: 2px;
  width: 58px;
  justify-content: flex-start;
  font-weight: 600;
}

.new-layout {
  gap: 4px;
  height: 23px;
  margin: 0 -6px;
  padding: 0 6px;
  border: 1px solid #c17d16;
  border-radius: 4px;
  color: #f0a030;
}

.indicators {
  gap: 4px;
  margin-left: -2px;
}

.indicators svg {
  width: 9px;
  height: 10px;
}

.redo {
  margin-left: 5px;
  opacity: 0.3;
}

.layout-tools {
  display: flex;
  align-items: center;
  gap: 8px;
  margin-left: auto;
  padding-right: 6px;
}

.layout-name {
  flex-direction: column;
  font-size: 9px;
  font-weight: 600;
  line-height: 10px;
}

.layout-name small {
  color: #2c55d8;
  font-size: 7px;
  line-height: 8px;
}

/* workspace */
.workspace {
  display: flex;
}

.drawing-bar {
  display: flex;
  flex-direction: column;
  flex: 0 0 34px;
  padding: 5px 0 14px;
  border-right: 3px solid #202020;
  color: #b8b8b8;
}

.drawing-bar button {
  height: 24px;
}

.drawing-bar hr {
  width: 24px;
  height: 1px;
  margin: 4px auto 3px;
  border: none;
  background: #444;
}

.drawing-bar .selected {
  color: #1f4fb8;
}

.drawing-bar .favorites {
  width: 20px;
  height: 20px;
  margin: auto auto 0;
  border-radius: 3px;
  background: #155ef0;
  color: #fff;
}

.chart-column {
  flex: 1;
  min-width: 0;
  border-right: 3px solid #303030;
}

.chart {
  position: relative;
}

.plot {
  width: 100%;
  height: auto;
  border-radius: 3px 3px 0 0;
  background: #fff;
}

.crisp {
  shape-rendering: crispEdges;
}

.grid {
  stroke: #f2f2f2;
}

.trend {
  fill: none;
  stroke: #222;
}

.oval {
  fill: none;
  stroke: #2fb5ae;
  stroke-width: 1.4;
}

.ring {
  fill: none;
  stroke: #fff;
}

.session {
  fill: #777;
  font-size: 9px;
}

.note {
  fill: #777;
  font-size: 6px;
  text-anchor: end;
}

.axis text {
  fill: #222;
  font-size: 8px;
  text-anchor: middle;
  white-space: pre;
}

.axis .tag {
  fill: #fff;
  font-weight: 500;
}

.legend {
  position: absolute;
  top: 4px;
  left: 6px;
  color: #1c1c1c;
}

.legend p {
  display: flex;
  align-items: center;
  margin: 0;
  white-space: nowrap;
}

.legend-title {
  height: 15px;
  font-size: 10px;
}

.live {
  width: 6px;
  height: 6px;
  margin: 0 11px;
  border: 2px solid #c9f2e2;
  border-radius: 50%;
  background: #15976c;
}

.ohlc {
  font-size: 8px;
}

.ohlc b {
  margin-right: 4px;
  color: #1a9a74;
  font-weight: 400;
}

.legend-study {
  height: 16px;
  font-family: Inter, "Noto Sans", sans-serif;
  font-size: 8px;
}

.legend .legend-ma {
  gap: 6px;
  height: 15px;
  color: #aaa;
  font-size: 8px;
}

.legend-ma svg {
  color: #333;
}

.collapse {
  width: 19px;
  height: 14px;
  margin-top: 2px;
  border: 1px solid #ddd;
  border-radius: 2px;
}

.floating-tools {
  position: absolute;
  top: 59px;
  left: 92px;
  display: flex;
  align-items: center;
  gap: 8px;
  height: 26px;
  padding: 0 3px 0 2px;
  border-radius: 4px;
  background: #29292b;
  box-shadow: 0 1px 4px rgba(0, 0, 0, 0.6);
  color: #ccc;
}

.drawer {
  position: absolute;
  bottom: 12px;
  left: -6px;
  width: 6px;
  height: 16px;
  background: #111;
  color: #bbb;
}

.range-bar {
  display: flex;
  align-items: center;
  gap: 7px;
  height: 28px;
  padding: 0 7px 0 9px;
  color: #ccc;
  font-size: 10px;
  font-weight: 500;
}

.go-date {
  margin-left: 2px;
}

.scale-tools {
  display: flex;
  align-items: center;
  gap: 8px;
  margin-left: auto;
}

.utc {
  font-family: "Noto Sans", sans-serif;
  font-size: 9px;
}

.right-rail {
  display: flex;
  flex: 0 0 30px;
  align-items: flex-start;
  justify-content: center;
  padding-top: 8px;
  box-sizing: border-box;
  color: #aaa;
}

/* account bar */
.account {
  display: flex;
  align-items: center;
  gap: 8px;
  height: 46px;
  padding: 0 14px 0 13px;
  font-size: 10px;
  font-weight: 400;
}

.buy,
.sell {
  height: 21px;
  padding: 0 7px;
  border-radius: 11px;
  background: #17b57e;
  color: #eafff5;
  font-weight: 600;
}

.sell {
  background: #e05a5e;
}

.quantity {
  box-sizing: border-box;
  width: 130px;
  height: 28px;
  padding: 0 8px;
  border: 1px solid #444;
  border-radius: 7px;
  background: #000;
  color: #ddd;
  font-size: 11px;
}

.quantity::placeholder {
  color: #666;
}

.rocket {
  width: 27px;
  height: 21px;
  border-radius: 11px;
  background: #46464a;
}

.stats {
  display: flex;
  align-items: center;
  gap: 10px;
  margin-left: auto;
  color: #f2f2f2;
  white-space: nowrap;
}

.dots {
  margin-right: 8px;
}

.analytics {
  gap: 5px;
  height: 22px;
  padding: 0 7px;
  border: 1px solid #555;
  border-radius: 12px;
}

/* taskbar */
.taskbar {
  display: grid;
  grid-template-columns: 1fr auto 1fr;
  align-items: center;
  height: 31px;
  border-top: 1px solid #444;
  background: #202020;
}

.pinned {
  display: flex;
  align-items: center;
  gap: 9px;
  padding-left: 4px;
}

.search {
  display: flex;
  align-items: center;
  gap: 6px;
  width: 128px;
  height: 20px;
  padding: 0 10px 0 7px;
  border-radius: 10px;
  background: #f2f2f2;
  color: #222;
}

.search input {
  width: 90px;
  padding: 0;
  border: none;
  background: transparent;
  font-size: 9px;
}

.apps {
  display: flex;
  justify-content: space-between;
  width: 404px;
  margin-left: -3px;
}

.apps button {
  position: relative;
  width: 24px;
  height: 28px;
}

.apps svg {
  width: 18px;
  height: 18px;
}

.apps .current {
  border-radius: 3px;
  background: #303030;
}

.open::after,
.current::after {
  content: "";
  position: absolute;
  bottom: 0;
  width: 4px;
  height: 2px;
  border-radius: 1px;
  background: #999;
}

.current::after {
  width: 10px;
  background: #5fb4ea;
}

.apps em {
  position: absolute;
  top: 0;
  right: -2px;
  width: 14px;
  height: 14px;
  border-radius: 50%;
  background: #48b4e4;
  color: #0c2a3a;
  font-size: 8px;
  font-style: normal;
  line-height: 14px;
}

.zoom-mark {
  fill: #fff;
  font-size: 4px;
  text-anchor: middle;
}

.clock {
  padding-right: 12px;
  color: #ddd;
  font-size: 8px;
  line-height: 11px;
  text-align: right;
}
</style>
